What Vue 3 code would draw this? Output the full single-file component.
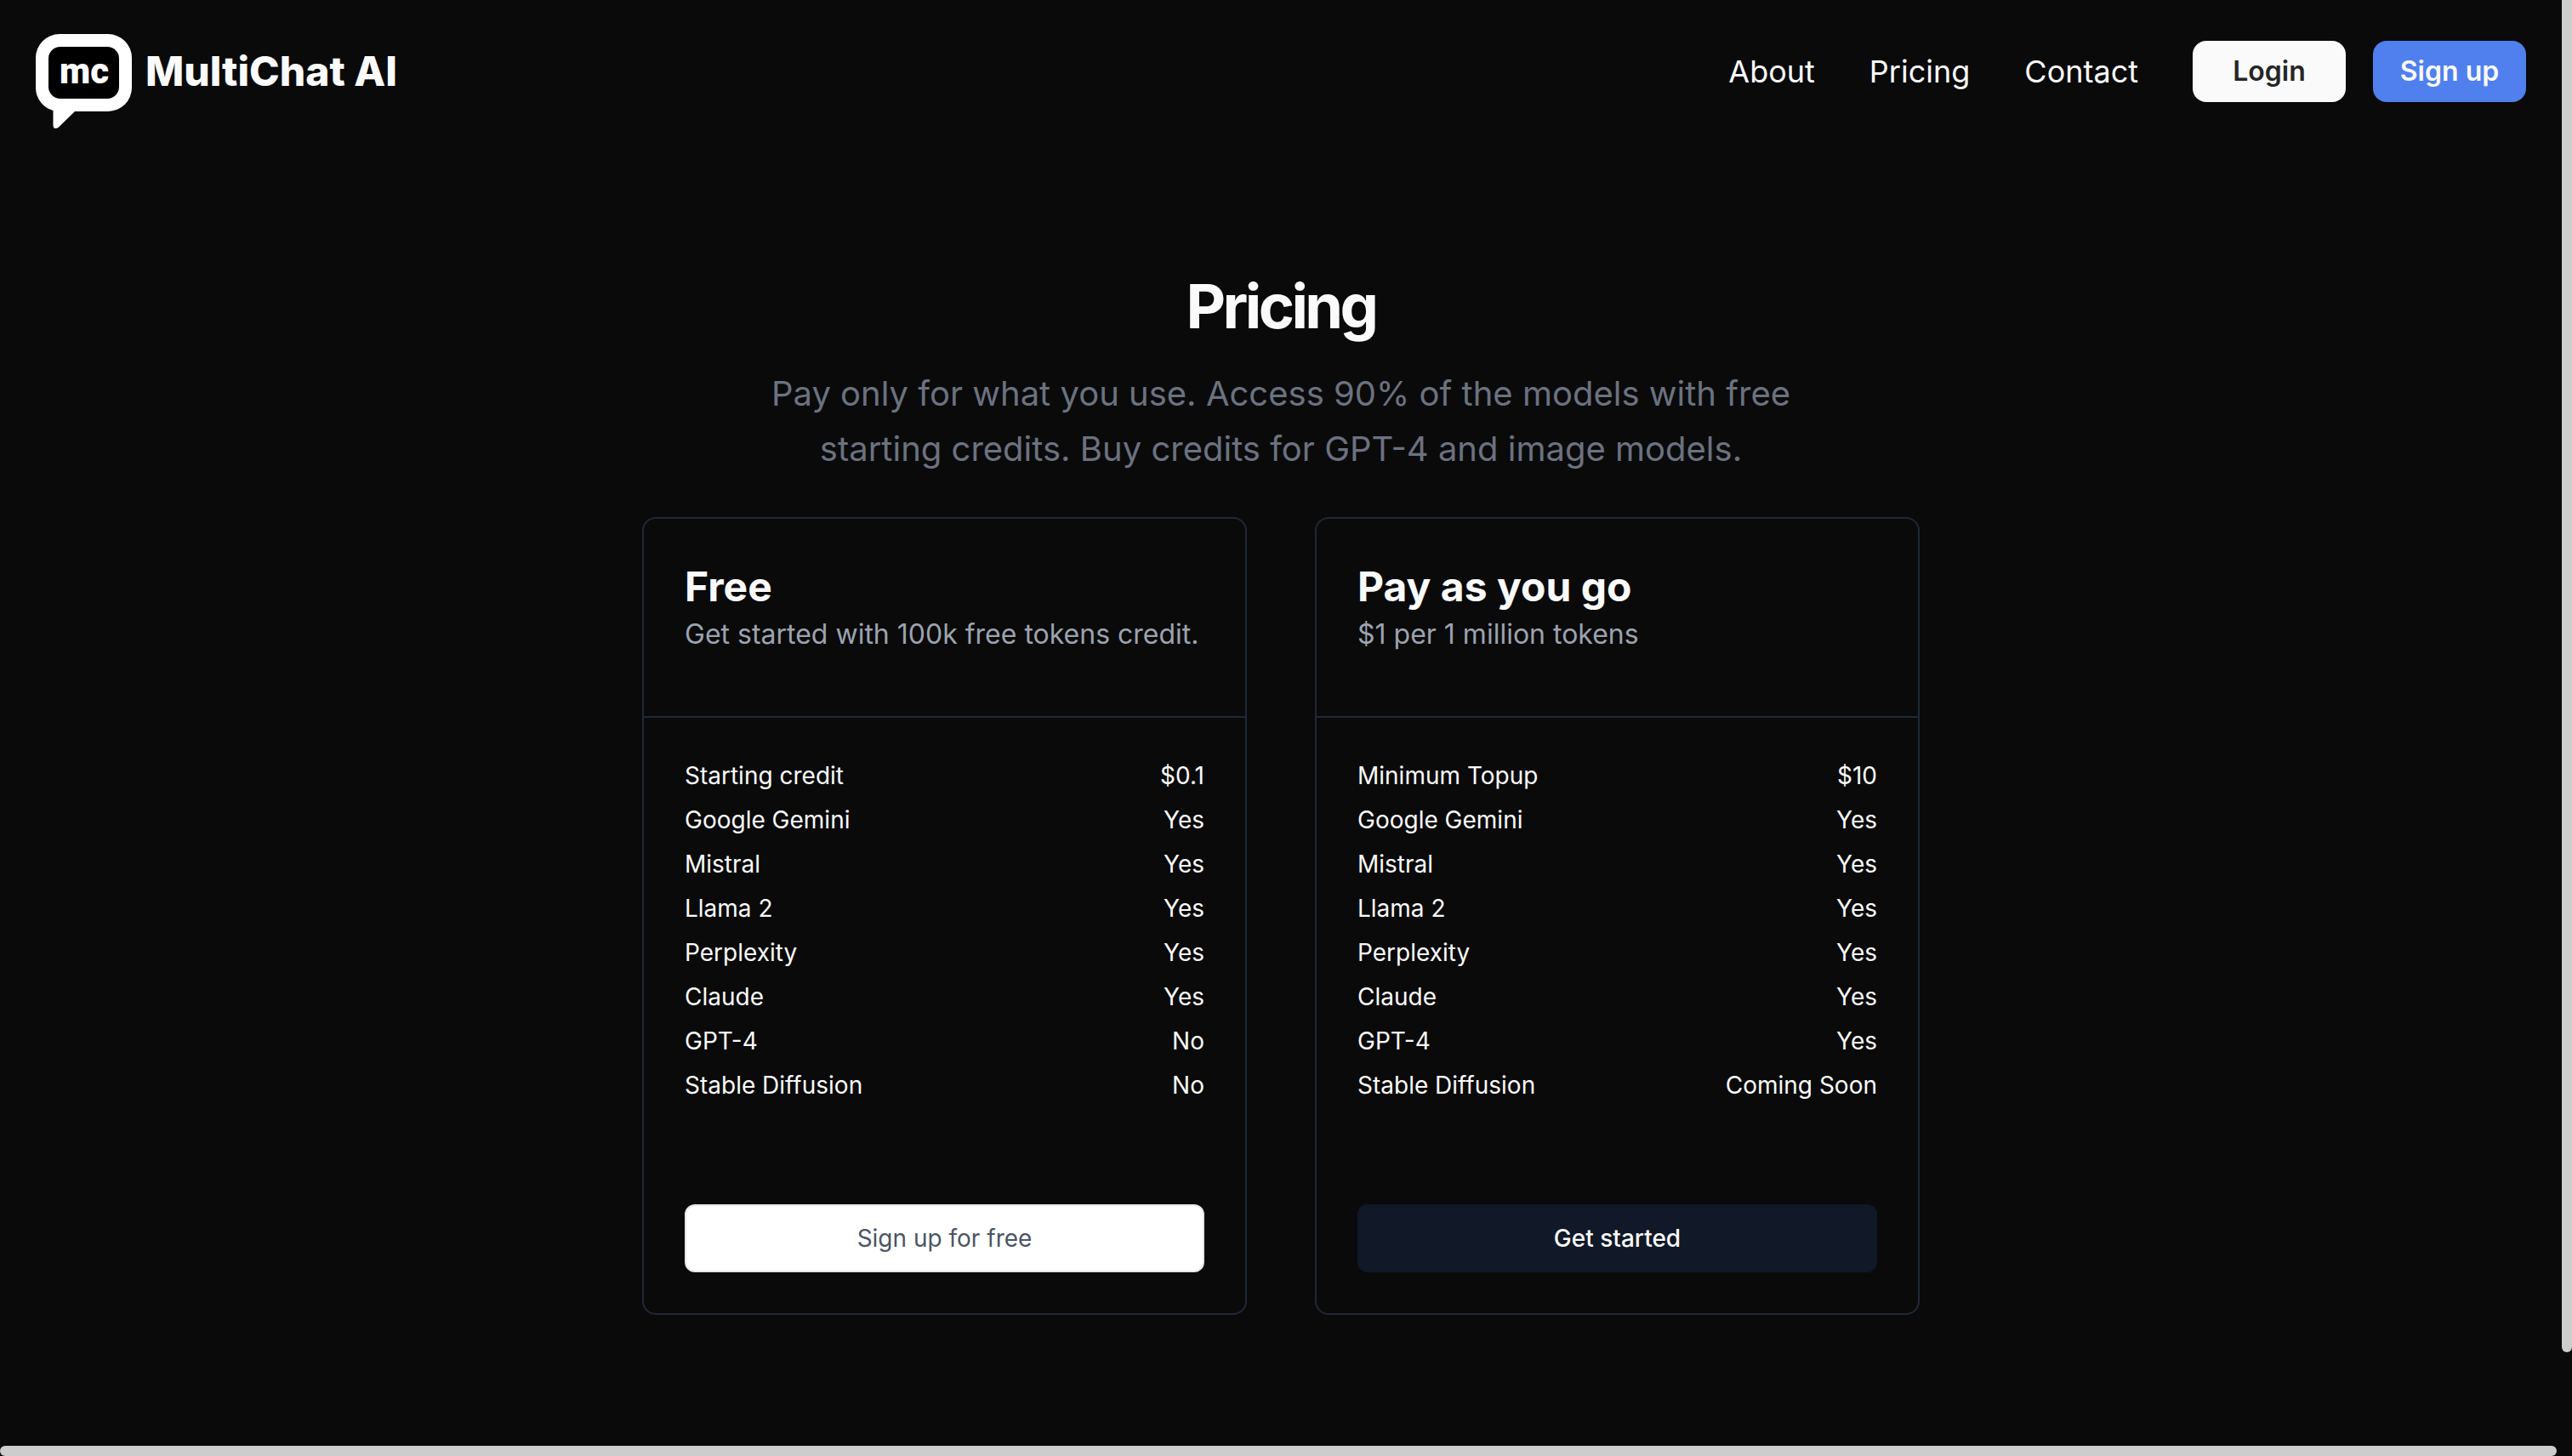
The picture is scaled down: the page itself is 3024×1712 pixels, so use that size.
<script setup>
const links = ['About', 'Pricing', 'Contact']

const plans = [
  {
    name: 'Free',
    summary: 'Get started with 100k free tokens credit.',
    features: [
      ['Starting credit', '$0.1'],
      ['Google Gemini', 'Yes'],
      ['Mistral', 'Yes'],
      ['Llama 2', 'Yes'],
      ['Perplexity', 'Yes'],
      ['Claude', 'Yes'],
      ['GPT-4', 'No'],
      ['Stable Diffusion', 'No'],
    ],
    action: 'Sign up for free',
    variant: 'light',
  },
  {
    name: 'Pay as you go',
    summary: '$1 per 1 million tokens',
    features: [
      ['Minimum Topup', '$10'],
      ['Google Gemini', 'Yes'],
      ['Mistral', 'Yes'],
      ['Llama 2', 'Yes'],
      ['Perplexity', 'Yes'],
      ['Claude', 'Yes'],
      ['GPT-4', 'Yes'],
      ['Stable Diffusion', 'Coming Soon'],
    ],
    action: 'Get started',
    variant: 'dark',
  },
]
</script>

<template>
  <div class="page">
    <header class="header">
      <a class="brand" href="#">
        <svg class="logo" viewBox="0 -24 113 136" aria-hidden="true">
          <path
            fill="#fff"
            d="M28 0H85A28 28 0 0 1 113 28V63A28 28 0 0 1 85 91H46L26.500 110Q20.500 113 20.500 107V90A28 28 0 0 1 0 63V28A28 28 0 0 1 28 0Z"
          />
          <rect x="15" y="15" width="83" height="61" rx="14" fill="#000" />
          <text class="logo-text" x="57" y="58" text-anchor="middle">mc</text>
        </svg>
        <span class="brand-name">MultiChat AI</span>
      </a>
      <nav class="nav">
        <a v-for="link in links" :key="link" class="nav-link" href="#">{{ link }}</a>
        <div class="auth">
          <button class="auth-button login" type="button">Login</button>
          <button class="auth-button signup" type="button">Sign up</button>
        </div>
      </nav>
    </header>

    <main class="main">
      <h1 class="title">Pricing</h1>
      <p class="lead">
        Pay only for what you use. Access 90% of the models with free starting credits. Buy credits
        for GPT-4 and image models.
      </p>
      <div class="plans">
        <section v-for="plan in plans" :key="plan.name" class="card">
          <div class="card-head">
            <h2 class="plan-name">{{ plan.name }}</h2>
            <p class="plan-summary">{{ plan.summary }}</p>
          </div>
          <div class="card-body">
            <table class="features">
              <tbody>
                <tr v-for="[label, value] in plan.features" :key="label">
                  <th scope="row">{{ label }}</th>
                  <td>{{ value }}</td>
                </tr>
              </tbody>
            </table>
            <button class="action" :class="plan.variant" type="button">{{ plan.action }}</button>
          </div>
        </section>
      </div>
    </main>

    <div class="scrollbar vertical" aria-hidden="true"></div>
    <div class="scrollbar horizontal" aria-hidden="true"></div>
  </div>
</template>

<style>
body {
  margin: 0;
  background: #0a0a0a;
}
</style>

<style scoped>
.page {
  position: relative;
  box-sizing: border-box;
  min-height: 100vh;
  padding-right: 12px;
  background: #0a0a0a;
  color: #fafafa;
  font-family: Inter, "Liberation Sans", sans-serif;
  font-size: 28px;
  line-height: 40px;
}

.header {
  display: flex;
  align-items: center;
  justify-content: space-between;
  padding: 16px 42px;
}

.brand {
  display: flex;
  align-items: center;
  gap: 16px;
  color: inherit;
  text-decoration: none;
}

.logo {
  display: block;
  width: 113px;
  height: 136px;
}

.logo-text {
  fill: #fff;
  font-family: Roboto, "Liberation Sans", sans-serif;
  font-size: 42px;
  font-weight: 900;
}

.brand-name {
  font-size: 48px;
  font-weight: 800;
  line-height: 64px;
}

.nav {
  display: flex;
  align-items: center;
  gap: 64px;
}

.nav-link {
  color: inherit;
  font-size: 36px;
  line-height: 56px;
  text-decoration: none;
}

.auth {
  display: flex;
  gap: 32px;
}

.auth-button {
  width: 180px;
  height: 72px;
  padding: 0 0 2px;
  border: 0;
  border-radius: 16px;
  font-family: inherit;
  font-size: 32px;
  font-weight: 600;
}

.login {
  background: #fafafa;
  color: #262626;
}

.signup {
  background: #4f80ee;
  color: #fafafa;
}

.main {
  display: flex;
  flex-direction: column;
  align-items: center;
  padding: 156px 48px 96px;
}

.title {
  margin: 0 0 34px;
  font-size: 72px;
  font-weight: 700;
  line-height: 72px;
  letter-spacing: -0.05em;
}

.lead {
  max-width: 1200px;
  margin: 0 0 48px;
  color: #6b7280;
  font-size: 40px;
  line-height: 65px;
  text-align: center;
}

.plans {
  display: grid;
  grid-template-columns: 1fr 1fr;
  gap: 80px;
  width: 100%;
  max-width: 1502px;
}

.card {
  border: 2px solid #1f2937;
  border-radius: 16px;
}

.card-head {
  padding: 48px 48px 72px;
  border-bottom: 2px solid #1f2937;
}

.plan-name {
  margin: 0;
  font-size: 48px;
  font-weight: 700;
  line-height: 64px;
}

.plan-summary {
  margin: 0;
  color: #9ca3af;
  font-size: 32px;
  line-height: 48px;
  white-space: nowrap;
}

.card-body {
  padding: 42px 48px 48px;
}

.features {
  width: 100%;
  margin-bottom: 114px;
  border-collapse: collapse;
}

.features th,
.features td {
  padding: 6px 0;
  font-weight: 400;
  text-align: left;
}

.features td {
  text-align: right;
}

.action {
  display: block;
  width: 100%;
  height: 80px;
  border: 2px solid #111827;
  border-radius: 12px;
  font-family: inherit;
  font-size: 28px;
}

.action.light {
  border-color: #e5e7eb;
  background: #fff;
  color: #4b5563;
}

.action.dark {
  background: #111827;
  color: #fafafa;
  font-weight: 500;
}

.scrollbar {
  position: absolute;
  background: #cdcdcd;
}

.vertical {
  top: 0;
  right: 0;
  bottom: 122px;
  width: 12px;
  border-radius: 0 0 6px 6px;
}

.horizontal {
  right: 18px;
  bottom: 0;
  left: 0;
  height: 12px;
  border-radius: 6px;
}
</style>
